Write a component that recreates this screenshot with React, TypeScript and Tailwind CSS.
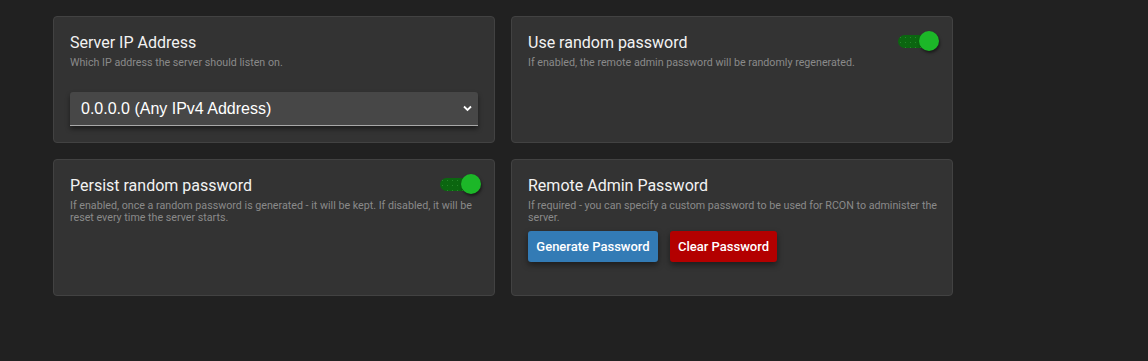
import React from "react";

function Toggle() {
  return (
    <div className="relative h-[20px] w-[41px] shrink-0">
      <div className="absolute left-0 top-[4px] h-[13px] w-[34px] rounded-full bg-[#0b6610] bg-[radial-gradient(circle,#26862b_0.5px,transparent_0.7px)] bg-[length:5px_5px]" />
      <div className="absolute right-0 top-0 h-[20px] w-[20px] rounded-full bg-[#1cb728] shadow-[1px_2px_3px_rgba(0,0,0,0.5)]" />
    </div>
  );
}

function Card({
  title,
  desc,
  toggle,
  height,
  children,
}: {
  title: string;
  desc: React.ReactNode;
  toggle?: boolean;
  height: string;
  children?: React.ReactNode;
}) {
  return (
    <div
      className={`${height} w-[442px] rounded-[4px] border border-[#424242] bg-[#333333] pl-[16px] pr-[13px] pt-[14px]`}
    >
      <div className="flex items-start justify-between">
        <div className="pt-[2px]">
          <div className="text-[16px] leading-[20px] text-[#f2f2f2]">{title}</div>
        </div>
        {toggle && <Toggle />}
      </div>
      <div className="mt-[4px] text-[10.7px] leading-[12px] text-[#8a8a8a]">{desc}</div>
      {children}
    </div>
  );
}

export default function App() {
  return (
    <div
      className="min-h-[361px] w-full bg-[#212121] pl-[53px] pt-[16px]"
      style={{ fontFamily: "Roboto, 'Liberation Sans', sans-serif" }}
    >
      <div className="grid w-max grid-cols-[442px_442px] gap-[16px]">
        <Card
          title="Server IP Address"
          desc="Which IP address the server should listen on."
          height="h-[127px]"
        >
          <div className="relative mt-[23px] mr-[3px] h-[34px] rounded-t-[3px] border-b border-[#a8a8a8] bg-[#474747] shadow-[0_3px_5px_rgba(0,0,0,0.45)]">
            <div
              className="pl-[11px] pt-[7px] text-[16px] leading-[19px] text-white"
              style={{ fontFamily: "Arial, 'Liberation Sans', sans-serif" }}
            >
              0.0.0.0 (Any IPv4 Address)
            </div>
            <svg
              className="absolute right-[6px] top-[13px]"
              width="9"
              height="7"
              viewBox="0 0 9 7"
            >
              <path d="M1 1.5 L4.5 5 L8 1.5" fill="none" stroke="white" strokeWidth="1.8" />
            </svg>
          </div>
        </Card>
        <Card
          title="Use random password"
          desc="If enabled, the remote admin password will be randomly regenerated."
          toggle
          height="h-[127px]"
        />
        <Card
          title="Persist random password"
          desc="If enabled, once a random password is generated - it will be kept. If disabled, it will be reset every time the server starts."
          toggle
          height="h-[137px]"
        />
        <Card
          title="Remote Admin Password"
          desc="If required - you can specify a custom password to be used for RCON to administer the server."
          height="h-[137px]"
        >
          <div className="mt-[7px] flex gap-[12px]">
            <button className="h-[31px] w-[130px] rounded-[3px] bg-[#337bb5] text-[13px] font-medium text-white shadow-[0_3px_6px_rgba(0,0,0,0.45)]">
              Generate Password
            </button>
            <button className="h-[31px] w-[107px] rounded-[3px] bg-[#b30000] text-[13px] font-medium text-white shadow-[0_3px_6px_rgba(0,0,0,0.45)]">
              Clear Password
            </button>
          </div>
        </Card>
      </div>
    </div>
  );
}
